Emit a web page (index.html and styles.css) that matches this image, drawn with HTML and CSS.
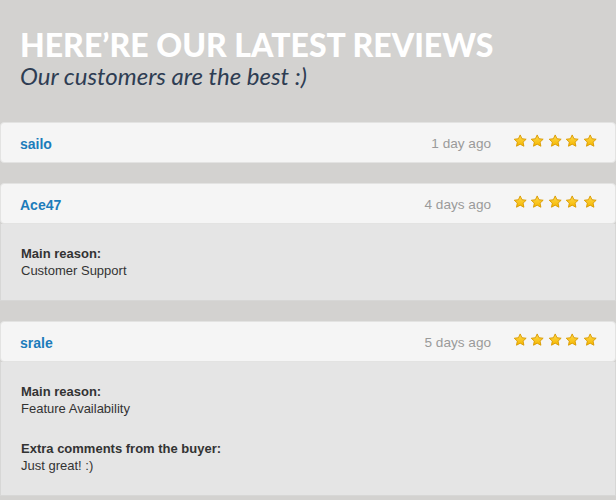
FILE: index.html
```html
<!DOCTYPE html>
<html>
<head>
<meta charset="utf-8">
<link rel="stylesheet" href="styles.css">
</head>
<body>
<svg width="0" height="0" class="defs">
  <defs>
    <linearGradient id="sg" x1="0" y1="0" x2="0" y2="1">
      <stop offset="0" stop-color="#ffd84a"/>
      <stop offset="1" stop-color="#f5b800"/>
    </linearGradient>
    <symbol id="star" viewBox="0 0 14 14">
      <path d="M7 0.9 L8.75 4.6 L12.8 5.1 L9.8 7.9 L10.6 11.9 L7 9.9 L3.4 11.9 L4.2 7.9 L1.2 5.1 L5.25 4.6 Z" fill="url(#sg)" stroke="#d99a00" stroke-width="0.9" stroke-linejoin="round"/>
    </symbol>
  </defs>
</svg>
<div class="page">
  <header class="intro">
    <h1 class="title">HERE’RE OUR LATEST REVIEWS</h1>
    <p class="subtitle">Our customers are the best :)</p>
  </header>

  <div class="reviews">
    <div class="review">
      <div class="review-head">
        <span class="name">sailo</span>
        <span class="when">1 day ago</span>
        <span class="stars">
          <svg class="star"><use href="#star"/></svg><svg class="star"><use href="#star"/></svg><svg class="star"><use href="#star"/></svg><svg class="star"><use href="#star"/></svg><svg class="star"><use href="#star"/></svg>
        </span>
      </div>
    </div>

    <div class="review">
      <div class="review-head">
        <span class="name">Ace47</span>
        <span class="when">4 days ago</span>
        <span class="stars">
          <svg class="star"><use href="#star"/></svg><svg class="star"><use href="#star"/></svg><svg class="star"><use href="#star"/></svg><svg class="star"><use href="#star"/></svg><svg class="star"><use href="#star"/></svg>
        </span>
      </div>
      <div class="review-body">
        <div class="group">
          <div class="label">Main reason:</div>
          <div class="value">Customer Support</div>
        </div>
      </div>
    </div>

    <div class="review">
      <div class="review-head">
        <span class="name">srale</span>
        <span class="when">5 days ago</span>
        <span class="stars">
          <svg class="star"><use href="#star"/></svg><svg class="star"><use href="#star"/></svg><svg class="star"><use href="#star"/></svg><svg class="star"><use href="#star"/></svg><svg class="star"><use href="#star"/></svg>
        </span>
      </div>
      <div class="review-body">
        <div class="group">
          <div class="label">Main reason:</div>
          <div class="value">Feature Availability</div>
        </div>
        <div class="group">
          <div class="label">Extra comments from the buyer:</div>
          <div class="value">Just great! :)</div>
        </div>
      </div>
    </div>
  </div>
</div>
</body>
</html>
```

FILE: styles.css
```css
html, body {
  margin: 0;
  padding: 0;
  background: #d3d2d0;
  overflow: hidden;
}
.defs {
  position: absolute;
  width: 0;
  height: 0;
}
.page {
  width: 616px;
  height: 500px;
}
.intro {
  padding: 28px 20px 0 20px;
  height: 95px;
  box-sizing: border-box;
}
.title {
  margin: 0;
  font-family: Lato, "Open Sans", sans-serif;
  font-weight: 900;
  font-size: 32px;
  line-height: 34px;
  color: #ffffff;
  letter-spacing: 0;
}
.subtitle {
  margin: 0;
  font-family: Lato, "Open Sans", sans-serif;
  font-style: italic;
  font-size: 24px;
  line-height: 28px;
  color: #2e3d53;
}
.reviews {
  display: flex;
  flex-direction: column;
  gap: 20px;
  padding-top: 27px;
  width: 616px;
  box-sizing: border-box;
}
.review {
  width: 616px;
  box-sizing: border-box;
}
.review-head {
  display: flex;
  align-items: center;
  height: 41px;
  box-sizing: border-box;
  background: #f5f5f5;
  border: 1px solid #e3e3e2;
  border-radius: 4px;
  padding: 0 18px 0 19px;
  font-family: "Liberation Sans", Arial, sans-serif;
}
.name {
  flex: 1;
  font-weight: bold;
  font-size: 14px;
  color: #1c7cbb;
  padding-top: 2px;
}
.when {
  font-size: 13.6px;
  color: #9a9a9a;
  margin-right: 22px;
  padding-top: 2px;
}
.stars {
  display: flex;
  gap: 3px;
  padding-bottom: 3px;
}
.star {
  width: 14.4px;
  height: 14.4px;
  display: block;
}
.review-body {
  background: #e5e5e5;
  border: 1px solid #d7d7d6;
  border-top: none;
  padding: 21px 20px 21px 20px;
  font-family: "Liberation Sans", Arial, sans-serif;
  font-size: 13px;
  line-height: 17px;
  color: #333333;
  display: flex;
  flex-direction: column;
  gap: 23px;
}
.label {
  font-weight: bold;
}
```
